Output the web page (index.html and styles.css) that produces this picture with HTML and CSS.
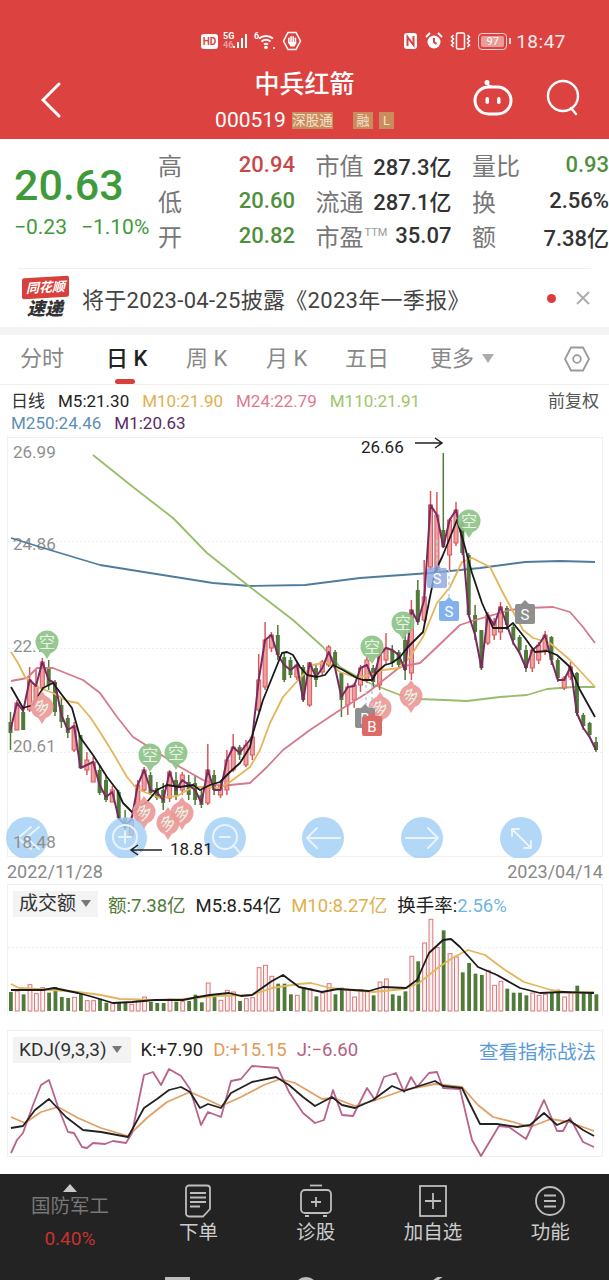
FILE: index.html
```html
<!DOCTYPE html>
<html lang="zh-CN">
<head>
  <meta charset="UTF-8" />
  <title>中兵红箭 000519</title>
  <link rel="stylesheet" href="styles.css">
</head>
<body>

  <header class="top">
    <div class="status">
      <div class="status-left">
        <span class="hd">HD</span>
        <svg class="ico-signal" width="26" height="20" viewBox="0 0 26 20">
          <text x="0" y="8" class="tiny">5G</text>
          <text x="0" y="17" class="tiny dim">46</text>
          <path d="M11 17v-2M15 17v-6M19 17V7M23 17V3" class="st"/>
        </svg>
        <svg class="ico-wifi" width="23" height="20" viewBox="0 0 23 20">
          <text x="0" y="8" class="tiny">6</text>
          <path d="M5 7.5a11 11 0 0 1 14 0M7.5 10.5a7.500 7.500 0 0 1 9 0M10 13.500a3.500 3.500 0 0 1 4 0" class="st"/>
          <circle cx="12" cy="16.500" r="1.800" class="fillw"/>
          <circle cx="20" cy="17" r="1" class="fillw"/>
        </svg>
        <svg class="ico-hand" width="20" height="20" viewBox="0 0 20 20">
          <path d="M6 1.500h8l4.500 8.500-4.500 8.500H6L1.500 10z" class="st thin"/>
          <rect x="6" y="6.500" width="1.600" height="6" rx="0.800" class="fillw"/>
          <rect x="8.200" y="5" width="1.600" height="7" rx="0.800" class="fillw"/>
          <rect x="10.400" y="5" width="1.600" height="7" rx="0.800" class="fillw"/>
          <rect x="12.600" y="6.500" width="1.600" height="6" rx="0.800" class="fillw"/>
          <path d="M6 11h8.200v1.500l-1.700 3h-4z" class="fillw"/>
        </svg>
      </div>
      <div class="status-right">
        <svg width="15" height="18" viewBox="0 0 15 18">
          <rect x="1" y="1" width="13" height="16" rx="3" class="fillw"/>
          <path d="M4.500 14V5l6 8V4" class="st red"/>
        </svg>
        <svg width="18" height="18" viewBox="0 0 18 18">
          <circle cx="9" cy="10" r="6.500" class="fillw"/>
          <path d="M9 6v4l2.500 2" class="st red"/>
          <path d="M1 5l4-4M17 5l-4-4" class="st"/>
        </svg>
        <svg width="21" height="18" viewBox="0 0 21 18">
          <rect x="6.500" y="1" width="8" height="16" rx="1.500" class="st thin"/>
          <path d="M3.500 3l-2 2 2 2-2 2 2 2-2 2 2 2M17.500 3l2 2-2 2 2 2-2 2 2 2-2 2" class="st thin"/>
        </svg>
        <span class="battery"><span class="battery-level">97</span></span>
        <span class="clock">18:47</span>
      </div>
    </div>

    <div class="titlebar">
      <div class="title-left">
        <svg width="20" height="36" viewBox="0 0 20 36"><path d="M18 2L2 18l16 16" class="st bold"/></svg>
      </div>
      <div class="title-mid">
        <h1>中兵红箭</h1>
        <div class="code-row">
          <span class="code">000519</span>
          <span class="tag tag-wide">深股通</span>
          <span class="tag tag-rong">融</span>
          <span class="tag tag-l">L</span>
        </div>
      </div>
      <div class="title-right">
        <svg width="40" height="38" viewBox="0 0 40 38">
          <circle cx="14" cy="3.500" r="2.500" class="fillw"/>
          <path d="M14 5c2 2 4 3 6 3" class="st thin2"/>
          <rect x="2" y="8" width="36" height="27" rx="13.500" class="st bold"/>
          <rect x="12.500" y="18" width="3.500" height="7" rx="1.700" class="fillw"/>
          <rect x="24" y="18" width="3.500" height="7" rx="1.700" class="fillw"/>
        </svg>
        <svg width="36" height="38" viewBox="0 0 36 38">
          <circle cx="17" cy="17" r="15" class="st mid"/>
          <path d="M25 29l5 6" class="st mid"/>
        </svg>
      </div>
    </div>
  </header>

  <section class="quote">
    <div class="price-box">
      <div class="price">20.63</div>
      <div class="change"><span>−0.23</span><span>−1.10%</span></div>
    </div>
    <div class="quote-grid">
      <div class="cell"><span class="lbl">高</span><span class="val up">20.94</span></div>
      <div class="cell"><span class="lbl">市值</span><span class="val">287.3亿</span></div>
      <div class="cell"><span class="lbl">量比</span><span class="val down">0.93</span></div>
      <div class="cell"><span class="lbl">低</span><span class="val down">20.60</span></div>
      <div class="cell"><span class="lbl">流通</span><span class="val">287.1亿</span></div>
      <div class="cell"><span class="lbl">换</span><span class="val">2.56%</span></div>
      <div class="cell"><span class="lbl">开</span><span class="val down">20.82</span></div>
      <div class="cell"><span class="lbl">市盈<sup class="ttm">TTM</sup></span><span class="val">35.07</span></div>
      <div class="cell"><span class="lbl">额</span><span class="val">7.38亿</span></div>
    </div>
  </section>

  <section class="notice">
    <div class="logo">
      <span class="logo-top">同花顺</span>
      <span class="logo-bottom">速递</span>
    </div>
    <p class="notice-text">将于2023-04-25披露《2023年一季报》</p>
    <span class="dot"></span>
    <svg class="close" width="14" height="14" viewBox="0 0 14 14"><path d="M1 1l12 12M13 1L1 13"/></svg>
  </section>

  <nav class="tabs">
    <span class="tab t1">分时</span>
    <span class="tab t2 active">日 K</span>
    <span class="tab t3">周 K</span>
    <span class="tab t4">月 K</span>
    <span class="tab t5">五日</span>
    <span class="tab t6">更多<i class="tri"></i></span>
    <svg class="hex" width="28" height="28" viewBox="0 0 28 28">
      <path d="M8 2.500h12l6 11.500-6 11.500H8L2 14z"/>
      <circle cx="14" cy="14" r="3.800"/>
    </svg>
  </nav>

  <div class="legend">
    <div class="legend-row">
      <span class="k-name">日线</span>
      <span class="c-black">M5:21.30</span>
      <span class="c-yellow">M10:21.90</span>
      <span class="c-pink">M24:22.79</span>
      <span class="c-green">M110:21.91</span>
      <span class="adjust">前复权</span>
    </div>
    <div class="legend-row">
      <span class="c-blue">M250:24.46</span>
      <span class="c-purple">M1:20.63</span>
    </div>
  </div>

  <svg id="kline" class="chart" width="609" height="422" viewBox="0 436 609 422"></svg>

  <div class="dates"><span>2022/11/28</span><span>2023/04/14</span></div>

  <section class="panel panel-vol">
    <div class="panel-head">
      <span class="picker">成交额<i class="tri small"></i></span>
      <span class="c-dgreen">额:7.38亿</span>
      <span class="c-black">M5:8.54亿</span>
      <span class="c-yellow">M10:8.27亿</span>
      <span class="c-black">换手率:<span class="c-sky">2.56%</span></span>
    </div>
    <svg id="volume" class="chart" width="609" height="100" viewBox="0 917 609 100"></svg>
  </section>

  <section class="panel panel-kdj">
    <div class="panel-head">
      <span class="picker picker-wide">KDJ(9,3,3)<i class="tri small"></i></span>
      <span class="c-black">K:+7.90</span>
      <span class="c-orange">D:+15.15</span>
      <span class="c-plum">J:−6.60</span>
      <a class="tactic">查看指标战法</a>
    </div>
    <svg id="kdj" class="chart" width="609" height="94" viewBox="0 1063 609 94"></svg>
  </section>

  <footer class="bottom">
    <div class="sector">
      <i class="tri-up"></i>
      <span class="sector-name">国防军工</span>
      <span class="sector-pct">0.40%</span>
    </div>
    <div class="action">
      <svg width="28" height="34" viewBox="0 0 28 34">
        <path d="M5 1.500h18a3 3 0 0 1 3 3V25l-7 7.500H5a3 3 0 0 1-3-3v-25a3 3 0 0 1 3-3z"/>
        <path d="M6 9h16M6 13.500h16M6 18h16M6 22.500h10"/>
      </svg>
      <span>下单</span>
    </div>
    <div class="action">
      <svg width="34" height="34" viewBox="0 0 34 34">
        <path d="M11 1.500h12"/>
        <rect x="2" y="6" width="30" height="23" rx="4"/>
        <path d="M17 13v10M12 18h10M6 32h4M24 32h4"/>
      </svg>
      <span>诊股</span>
    </div>
    <div class="action">
      <svg width="30" height="34" viewBox="0 0 30 34">
        <rect x="2" y="2" width="26" height="30"/>
        <path d="M15 9v16M7 17h16"/>
      </svg>
      <span>加自选</span>
    </div>
    <div class="action">
      <svg width="32" height="34" viewBox="0 0 32 34">
        <circle cx="16" cy="17" r="14"/>
        <path d="M10 11.500h12M10 17h12M10 22.500h12"/>
      </svg>
      <span>功能</span>
    </div>
    <div class="navkeys">
      <i class="nav-square"></i>
      <i class="nav-circle"></i>
      <i class="nav-back"></i>
    </div>
  </footer>

  <script src="chart.js"></script>
</body>
</html>
```

FILE: styles.css
```css
* {
  box-sizing: border-box;
}

html, body {
  margin: 0;
  padding: 0;
}

body {
  width: 609px;
  height: 1280px;
  overflow: hidden;
  background: #fff;
  color: #333;
  font-family: Roboto, "Noto Sans CJK SC", sans-serif;
}

svg {
  display: block;
  flex: none;
}

/* 顶部红色区域 */
.top {
  height: 139px;
  padding-top: 28px;
  background: #dc4340;
  color: #fff;
}

.status {
  display: flex;
  justify-content: space-between;
  height: 26px;
  padding: 0 43px 0 201px;
}

.status-left, .status-right {
  display: flex;
  align-items: center;
}

.status-left { gap: 5px; }
.status-right { gap: 7px; }

.st {
  fill: none;
  stroke: #fff;
  stroke-width: 2;
}
.st.thin { stroke-width: 1.500; }
.st.thin2 { stroke-width: 1.800; }
.st.mid { stroke-width: 2.400; stroke-linecap: round; }
.st.bold { stroke-width: 3; stroke-linecap: round; }
.st.red { stroke: #dc4340; }
.fillw { fill: #fff; }

.tiny {
  fill: #fff;
  font-size: 9px;
  font-weight: 700;
}
.tiny.dim { fill: #f2a09e; }

.hd {
  width: 17px;
  height: 15px;
  border-radius: 3px;
  background: #fff;
  color: #dc4340;
  font-size: 10px;
  font-weight: 700;
  line-height: 15px;
  text-align: center;
}

.battery {
  position: relative;
  width: 29px;
  height: 17px;
  margin-right: 2px;
  padding: 2px;
  border: 1.500px solid #f4d2d1;
  border-radius: 4px;
}
.battery::after {
  content: "";
  position: absolute;
  right: -5px;
  top: 4px;
  width: 2px;
  height: 6px;
  background: #f4d2d1;
}
.battery-level {
  display: block;
  height: 100%;
  border-radius: 2px;
  background: #ea9c9a;
  font-size: 11px;
  line-height: 11px;
  text-align: center;
}

.clock {
  font-size: 19px;
  letter-spacing: 0.5px;
  color: #fbecec;
}

.titlebar {
  display: grid;
  grid-template-columns: 1fr auto 1fr;
  margin-top: 16px;
}

.title-left {
  padding: 12px 0 0 41px;
}

.title-mid {
  text-align: center;
}

.title-mid h1 {
  margin: 0;
  font-size: 25px;
  font-weight: 500;
  line-height: 30px;
}

.code-row {
  display: flex;
  align-items: center;
  height: 24px;
  margin-top: 8px;
}

.code {
  font-size: 21px;
  margin-right: 6px;
}

.tag {
  height: 17px;
  background: #c98c5c;
  color: #f4e3d2;
  font-size: 13px;
  line-height: 17px;
  text-align: center;
}
.tag-wide { width: 41px; overflow: hidden; white-space: nowrap; font-size: 13.500px; }
.tag-rong { width: 20px; margin-left: 20px; }
.tag-l { width: 15px; margin-left: 6px; }

.title-right {
  display: flex;
  justify-content: flex-end;
  gap: 33px;
  padding: 9px 27px 0 0;
}

/* 行情 */
.quote {
  display: flex;
  height: 129px;
  padding-top: 8px;
}

.price-box {
  width: 158px;
  padding: 11px 0 0 14px;
}

.price {
  font-size: 43px;
  font-weight: 500;
  line-height: 54px;
  color: #3f9a3c;
}

.change {
  display: flex;
  gap: 14px;
  margin-top: 1px;
  font-size: 21px;
  line-height: 28px;
  color: #3f9a3c;
  white-space: nowrap;
}

.quote-grid {
  display: grid;
  grid-template-columns: 137px 136px 137px;
  grid-auto-rows: 35.500px;
  column-gap: 20.500px;
}

.cell {
  display: flex;
  align-items: center;
  justify-content: space-between;
  white-space: nowrap;
}

.lbl {
  font-size: 24px;
  color: #777;
}

.ttm {
  margin-left: 1px;
  font-size: 11px;
  line-height: 0;
  vertical-align: 10px;
  color: #999;
}

.val {
  font-size: 22px;
  font-weight: 500;
  color: #333;
}
.val.up { color: #c8474a; }
.val.down { color: #4f8f3e; }

/* 公告 */
.notice {
  display: flex;
  align-items: center;
  height: 59px;
  margin: 0 18px;
  border-top: 1px solid #f0f0f0;
  padding: 0 1px 0 3px;
}

.logo {
  display: flex;
  flex-direction: column;
  align-items: center;
  width: 48px;
  margin-right: 13px;
}

.logo-top {
  width: 47px;
  height: 21px;
  border-radius: 2px;
  transform: skewY(-3deg);
  background: #d8403c;
  color: #fff;
  font-size: 13px;
  font-style: italic;
  font-weight: 700;
  line-height: 21px;
  text-align: center;
}

.logo-bottom {
  margin-top: 1px;
  color: #333;
  font-size: 18px;
  font-style: italic;
  font-weight: 900;
  line-height: 20px;
}

.notice-text {
  flex: 1;
  margin: 0;
  font-size: 22px;
  letter-spacing: 0.300px;
  color: #444;
  white-space: nowrap;
}

.dot {
  width: 9px;
  height: 9px;
  margin-right: 20px;
  border-radius: 50%;
  background: #dc3c3a;
}

.close {
  fill: none;
  stroke: #aaa;
  stroke-width: 1.800;
}

/* 周期切换 */
.tabs {
  position: relative;
  display: flex;
  align-items: center;
  height: 58px;
  border-top: 8px solid #f4f4f4;
  border-bottom: 1px solid #efefef;
  font-size: 22px;
  color: #888;
}

.tab {
  position: absolute;
  top: 9px;
  line-height: 30px;
  white-space: nowrap;
}
.t1 { left: 20px; }
.t2 { left: 106px; }
.t3 { left: 186px; }
.t4 { left: 266px; }
.t5 { left: 345px; }
.t6 { left: 430px; }

.tab.active {
  color: #222;
  font-weight: 500;
}
.tab.active::after {
  content: "";
  position: absolute;
  left: 9px;
  bottom: -10px;
  width: 20px;
  height: 5px;
  border-radius: 3px;
  background: #d8403c;
}

.tri {
  display: inline-block;
  margin-left: 8px;
  border-left: 6px solid transparent;
  border-right: 6px solid transparent;
  border-top: 9px solid #aaa;
  vertical-align: 3px;
}
.tri.small {
  margin-left: 5px;
  border-left-width: 5px;
  border-right-width: 5px;
  border-top: 7px solid #777;
  vertical-align: 3px;
}

.hex {
  position: absolute;
  right: 18px;
  top: 10px;
  fill: none;
  stroke: #999;
  stroke-width: 1.800;
}

/* 均线 */
.legend {
  height: 51px;
  padding: 5px 10px 0 11px;
  font-size: 17px;
  line-height: 22px;
}

.legend-row {
  display: flex;
  gap: 13px;
}

.k-name { color: #333; margin-right: 0; }
.adjust { margin-left: auto; color: #555; }

.c-black { color: #222; }
.c-yellow { color: #e0b050; }
.c-pink { color: #de7a90; }
.c-green { color: #9cc66a; }
.c-blue { color: #5d8fb5; }
.c-purple { color: #5a2a66; }
.c-dgreen { color: #4f7a3a; }
.c-sky { color: #6fb6e0; }
.c-orange { color: #e39a5a; }
.c-plum { color: #b4607f; }

.chart {
  display: block;
}

.dates {
  display: flex;
  justify-content: space-between;
  height: 26px;
  padding: 3px 6px 0 7px;
  font-size: 18px;
  line-height: 22px;
  color: #888;
}

/* 副图 */
.panel {
  position: relative;
  margin: 0 6px 0 7px;
  border: 1px solid #f0f0f0;
  background: #fff;
}

.panel .chart {
  margin-left: -8px;
}

.panel-vol {
  height: 131px;
  padding-top: 6px;
  border-bottom: 0;
}

.panel-kdj {
  height: 127px;
  margin-top: 15px;
  padding-top: 6px;
}

.panel-head {
  display: flex;
  align-items: center;
  gap: 10px;
  height: 26px;
  padding-left: 5px;
  font-size: 18.500px;
  white-space: nowrap;
}

.picker {
  display: block;
  height: 26px;
  padding: 0 7px 0 6px;
  background: #f3f3f3;
  color: #333;
  font-size: 19px;
  line-height: 25px;
}
.picker-wide {
  padding-right: 9px;
}

.tactic {
  margin-left: auto;
  margin-right: 6px;
  font-size: 19.500px;
  color: #5b9bd5;
}

/* svg 图形 */
.grid-line {
  stroke: #eee;
  stroke-width: 1;
  stroke-dasharray: 2 2;
}
.frame {
  fill: none;
  stroke: #f0f0f0;
}
.axis {
  fill: #8f8f8f;
  font-size: 17px;
}
.note {
  fill: #222;
  font-size: 17px;
}
.arrow {
  fill: none;
  stroke: #222;
  stroke-width: 1.500;
}
.line {
  fill: none;
  stroke-width: 1.800;
  stroke-linejoin: round;
}
.l-close { stroke: #7a2a5e; stroke-width: 2; }
.l-m5 { stroke: #1a1a1a; }
.l-m10 { stroke: #e3b65c; }
.l-m24 { stroke: #d57a8c; }
.l-m110 { stroke: #97bd6b; }
.l-m250 { stroke: #4f7c9c; }
.l-k { stroke: #222; }
.l-d { stroke: #e0a066; }
.l-j { stroke: #b8638c; }

.wick-r { stroke: #d8565a; stroke-width: 1.500; }
.wick-g { stroke: #4f7a3a; stroke-width: 1.500; }
.body-r { fill: #eea0a0; stroke: #d8565a; }
.body-g { fill: #4f7a3a; }
.bar-r { fill: #fdf3f3; stroke: #d9777a; }
.bar-g { fill: #4f7a3a; }

.pin-kong { fill: #8fc488; }
.pin-duo { fill: #ec9a98; }
.pin-group { opacity: 0.92; }
.pin-text {
  fill: #e8f5e6;
  font-size: 16px;
  text-anchor: middle;
}
.flag-text {
  fill: #fff;
  font-size: 15px;
  text-anchor: middle;
}
.flag-grey { fill: #8f8f8f; }
.flag-red { fill: #dc6a66; }
.flag-blue { fill: #82b2ee; }
.flag-faint { fill: #8aa5e0; opacity: 0.8; }
.flag-link {
  stroke: #b9cfe6;
  stroke-width: 1.500;
  stroke-dasharray: 3 3;
}

.nav-btn { fill: #9fcdf5; opacity: 0.8; }
.nav-ico {
  fill: none;
  stroke: #e8f3fc;
  stroke-width: 2;
  stroke-linecap: round;
}

/* 底部工具栏 */
.bottom {
  position: relative;
  display: flex;
  height: 106px;
  margin-top: 17px;
  padding-top: 10px;
  background: #232323;
  color: #ccc;
}

.sector {
  display: flex;
  flex-direction: column;
  align-items: center;
  width: 140px;
}

.tri-up {
  width: 0;
  border-left: 7px solid transparent;
  border-right: 7px solid transparent;
  border-bottom: 8px solid #c9c9c9;
}

.sector-name {
  margin-top: 1px;
  font-size: 19.500px;
  line-height: 28px;
  color: #777;
}

.sector-pct {
  margin-top: 5px;
  font-size: 19px;
  line-height: 26px;
  color: #c8322e;
}

.action {
  display: flex;
  flex-direction: column;
  align-items: center;
  width: 117.500px;
  font-size: 19.500px;
  line-height: 28px;
}

.action svg {
  fill: none;
  stroke: #bdbdbd;
  stroke-width: 1.800;
}

.action span {
  margin-top: 1px;
}

.navkeys {
  position: absolute;
  left: 0;
  right: 0;
  top: 103px;
  height: 3px;
  overflow: hidden;
}
.navkeys i {
  position: absolute;
  top: 0;
  display: block;
}
.nav-square {
  left: 165px;
  width: 25px;
  height: 25px;
  border-top: 3px solid #bdbdbd;
}
.nav-circle {
  left: 294px;
  width: 24px;
  height: 24px;
  border: 3px solid #bdbdbd;
  border-radius: 50%;
}
.nav-back {
  left: 432px;
  width: 16px;
  height: 16px;
  border-top: 3px solid #bdbdbd;
  transform: rotate(-35deg);
}
```

FILE: chart.js
```js
// K线和副图都画成 svg，数据直接按屏幕坐标记下来
const NS = 'http://www.w3.org/2000/svg';

function add(parent, tag, attrs, text) {
  const node = document.createElementNS(NS, tag);
  for (const key in attrs) node.setAttribute(key, attrs[key]);
  if (text) node.textContent = text;
  parent.appendChild(node);
  return node;
}

function line(parent, cls, pts) {
  add(parent, 'polyline', { class: 'line ' + cls, points: pts.join(' ') });
}

const STEP = 6.364;
const X0 = 10.5;

// type, 实体上沿, 实体下沿, 最高, 最低, 收盘
const candles = [
  ['g',722,733,712,750,730],['r',703,730,700,730,703],['g',712,730,708,730,711],['r',680,710,667,712,680],
  ['r',686,700,670,702,686],['r',662,688,658,690,662],['g',668,685,660,690,680],['g',682,712,680,716,683],
  ['g',705,722,698,728,715],['g',718,733,715,738,730],['r',726,750,722,752,726],['g',735,768,735,768,768],
  ['r',760,770,752,775,765],['r',762,782,757,782,762],['g',770,793,765,795,785],['g',780,800,775,802,797],
  ['r',790,802,786,802,792],['g',792,818,790,820,818],['g',818,828,810,832,825],['r',820,835,816,838,820],
  ['r',785,815,780,822,785],['r',770,790,767,792,770],['g',775,793,772,795,790],['g',788,798,782,800,792],
  ['g',790,803,783,810,800],['r',772,798,770,802,772],['g',780,795,772,800,790],['r',775,790,772,795,780],
  ['g',782,795,775,800,785],['g',783,800,776,805,790],['g',795,805,790,808,803],['r',770,803,744,805,770],
  ['g',775,790,770,795,790],['r',785,795,782,798,790],['r',760,790,750,795,760],['r',747,770,734,772,747],
  ['g',747,755,745,760,753],['r',745,765,740,767,745],['r',737,755,735,760,737],['r',680,710,654,712,680],
  ['r',640,687,622,690,640],['r',635,648,632,652,635],['g',635,655,625,660,655],['g',657,680,652,682,665],
  ['g',660,675,657,678,670],['r',665,677,662,680,665],['g',667,700,665,702,700],['r',663,705,662,707,663],
  ['g',668,680,665,687,677],['r',662,672,660,675,668],['r',647,665,645,667,652],['g',652,666,650,668,668],
  ['g',673,700,673,717,697],['r',687,705,683,715,687],['r',685,700,683,708,686],['r',668,685,665,692,668],
  ['r',660,680,657,683,665],['g',668,682,665,687,680],['r',655,685,648,690,655],['r',648,660,633,664,648],
  ['g',650,663,645,667,650],['g',652,665,650,668,655],['g',640,670,625,680,670],['r',610,673,600,680,610],
  ['g',590,622,580,625,622],['r',597,620,560,622,600],['r',505,567,491,570,505],['r',515,570,492,572,515],
  ['g',530,547,453,548,547],['r',520,555,518,570,520],['r',510,543,502,546,510],['g',523,553,515,555,540],
  ['g',555,615,553,617,615],['g',615,632,605,640,635],['g',630,668,630,670,668],['r',615,643,612,645,615],
  ['r',622,635,618,640,625],['r',607,632,602,640,607],['g',608,625,606,630,625],['g',627,640,625,645,643],
  ['g',637,650,635,655,653],['g',650,668,645,672,668],['r',650,668,648,672,650],['r',645,660,642,664,645],
  ['r',635,650,631,655,635],['g',637,660,636,665,660],['g',660,678,658,682,680],['r',678,688,676,690,680],
  ['r',667,677,662,680,667],['g',673,713,672,716,713],['g',715,726,713,730,728],['g',723,735,722,738,737],
  ['g',742,750,737,752,750]
];

const m5 = ['11,687','23,708','33,705','43,688','53,683','62,695','72,708','80,737','93,755','107,777','117,790','123,803','132,812','147,802','157,790','167,785','180,787','193,785','200,790','210,785','220,782','230,772','240,763','250,747','253,733','263,700','282,653','287,652','293,655','300,667','307,675','317,677','325,675','333,665','343,670','357,678','363,680','372,680','377,672','385,665','392,663','400,657','407,648','423,632','430,597','435,572','443,555','457,520','463,540','472,573','482,603','493,628','507,628','513,623','525,638','535,652','547,651','557,655','570,667','580,690','595,717'];
const m10 = ['11,652','18,663','25,677','37,687','53,693','67,701','78,703','90,717','100,732','113,753','127,777','137,789','147,793','160,798','177,796','193,787','207,787','220,788','230,782','250,767','260,750','270,723','283,697','300,678','313,665','327,662','340,672','357,678','370,675','383,670','400,668','410,657','423,637','437,603','450,587','462,562','472,558','490,567','503,593','523,630','533,638','550,643','570,660','595,687'];
const m24 = ['11,681','27,678','37,668','53,668','83,680','100,693','117,717','133,737','157,752','180,767','203,780','220,786','250,783','267,767','283,750','310,730','340,710','367,693','400,667','420,663','437,647','460,625','472,621','510,610','527,608','553,607','570,612','583,627','595,643'];
const m110 = ['93,455','133,487','173,518','207,553','250,587','267,600','293,620','323,647','340,667','367,682','387,690','400,695','420,699','467,701','500,697','527,695','547,689','573,687','595,687'];
const m250 = ['11,538','50,550','100,565','150,573','213,583','250,586','305,585','360,578','430,573','480,568','525,562','560,561','595,562'];

// 成交额柱子顶部，放大图里量的数，基线 452，高度再除 3
const volTops = [
  ['g',395],['r',392],['g',402],['r',373],['r',400],['r',382],['g',397],['g',380],['g',410],['g',413],
  ['r',411],['g',398],['r',421],['r',421],['g',415],['g',427],['r',430],['g',426],['g',425],['r',432],
  ['r',420],['r',410],['g',425],['g',428],['g',428],['r',416],['g',424],['r',424],['g',422],['g',403],
  ['g',426],['r',368],['g',405],['r',420],['r',390],['r',395],['g',422],['r',415],['r',412],['r',322],
  ['r',315],['r',348],['g',370],['g',370],['g',402],['r',405],['g',380],['r',385],['g',408],['r',398],
  ['r',370],['g',402],['g',382],['r',390],['r',410],['r',388],['r',392],['g',405],['r',365],['r',356],
  ['g',402],['g',406],['g',393],['r',288],['g',303],['r',248],['r',177],['r',262],['g',210],['r',280],
  ['r',290],['g',336],['g',308],['g',340],['g',344],['r',330],['r',375],['r',363],['g',385],['g',397],
  ['g',397],['g',405],['r',398],['r',405],['r',402],['g',398],['g',388],['r',410],['r',398],['g',376],
  ['g',395],['g',398],['g',402]
];

const volM5 = ['11,990','43,990','54,988','78,993','93,997','113,1003','132,1002','155,1000','183,1000','198,997','210,995','229,993','241,996','252,995','272,981','283,975','299,987','322,992','338,989','369,991','383,987','406,988','417,980','429,953','443,940','451,939','460,947','478,967','497,975','520,988','540,993','563,992','594,993'];
const volM10 = ['11,984','19,988','39,989','78,992','101,995','120,999','155,1000','183,999','217,996','252,995','272,988','299,984','311,983','330,988','350,990','373,992','404,989','419,983','439,967','454,957','468,950','485,955','505,970','524,982','551,990','571,993','594,992'];

const kLine = ['11,1128','23,1126','35,1110','49,1099','66,1117','83,1130','101,1132','128,1137','144,1108','157,1099','169,1090','181,1087','190,1092','200,1108','208,1104','221,1108','231,1093','252,1082','276,1077','289,1085','303,1097','315,1106','332,1097','342,1105','355,1108','373,1100','392,1086','404,1091','416,1087','435,1081','443,1086','462,1088','480,1124','497,1124','517,1127','530,1125','544,1113','557,1125','569,1120','583,1130','594,1136'];
const dLine = ['11,1117','25,1123','41,1112','58,1107','78,1118','101,1128','128,1136','148,1117','167,1102','190,1092','206,1099','221,1106','241,1097','264,1085','280,1079','295,1083','322,1099','334,1098','355,1106','373,1101','404,1090','435,1084','462,1087','478,1105','493,1117','513,1122','530,1127','551,1119','569,1122','594,1131'];
const jLine = ['11,1153','17,1140','23,1133','33,1105','41,1085','49,1080','58,1107','68,1132','74,1133','82,1147','87,1148','93,1143','105,1144','113,1141','126,1143','132,1133','144,1075','153,1072','161,1085','169,1069','181,1076','190,1089','201,1125','208,1112','221,1117','231,1081','241,1079','252,1066','278,1068','289,1092','303,1113','315,1123','324,1120','333,1090','342,1115','353,1116','367,1088','375,1100','384,1077','396,1073','404,1092','411,1077','417,1087','429,1073','437,1072','443,1088','460,1089','472,1140','481,1156','499,1126','509,1127','526,1139','544,1100','557,1131','563,1131','570,1118','583,1142','594,1147'];

function drawPin(g, kind, x, y, label) {
  const cls = kind === 'kong' ? 'pin-kong' : 'pin-duo';
  const pin = add(g, 'g', { class: 'pin-group' });
  add(pin, 'circle', { class: cls, cx: x, cy: y, r: 11.5 });
  add(pin, 'path', { class: cls, d: `M${x - 5} ${y + 9}L${x} ${y + 17}L${x + 5} ${y + 9}z` });
  const t = add(pin, 'text', { class: 'pin-text', x: x, y: y + 6 }, label);
  if (kind === 'duo') {
    t.setAttribute('transform', `rotate(-30 ${x} ${y})`);
    add(pin, 'path', { class: cls, d: `M${x - 5} ${y - 9}L${x} ${y - 16}L${x + 5} ${y - 9}z` });
  }
}

function drawFlag(g, cls, x, y, label) {
  add(g, 'rect', { class: cls, x: x - 10, y: y - 10, width: 20, height: 20, rx: 2 });
  add(g, 'path', { class: cls, d: `M${x - 4} ${y - 10}L${x} ${y - 14}L${x + 4} ${y - 10}z` });
  add(g, 'text', { class: 'flag-text', x: x, y: y + 6 }, label);
}

function drawKline() {
  const svg = document.getElementById('kline');
  add(svg, 'rect', { class: 'frame', x: 7.5, y: 437.5, width: 595, height: 419 });
  [541.5, 648.5, 752.5].forEach(y => add(svg, 'line', { class: 'grid-line', x1: 8, x2: 602, y1: y, y2: y }));

  [['26.99', 452], ['24.86', 544], ['22.71', 646], ['20.61', 746]].forEach(([txt, y]) => {
    add(svg, 'text', { class: 'axis', x: 13, y: y + 6 }, txt);
  });

  line(svg, 'l-m250', m250);
  line(svg, 'l-m110', m110);

  const closes = [];
  candles.forEach((c, i) => {
    const x = +(X0 + i * STEP).toFixed(1);
    add(svg, 'line', { class: 'wick-' + c[0], x1: x, x2: x, y1: c[3], y2: c[4] });
    add(svg, 'rect', { class: 'body-' + c[0], x: x - 2, y: c[1], width: 4, height: c[2] - c[1] });
    closes.push(x + ',' + c[5]);
  });

  line(svg, 'l-m24', m24);
  line(svg, 'l-m10', m10);
  line(svg, 'l-close', closes);
  line(svg, 'l-m5', m5);

  const marks = add(svg, 'g', {});
  [[47, 642], [150, 755], [176, 753], [372, 647], [403, 623], [469, 521]].forEach(p => drawPin(marks, 'kong', p[0], p[1], '空'));
  [[42, 707], [144, 812], [168, 823], [182, 813], [380, 708], [411, 696]].forEach(p => drawPin(marks, 'duo', p[0], p[1], '多'));

  add(marks, 'line', { class: 'flag-link', x1: 437, x2: 437, y1: 540, y2: 570 });
  add(marks, 'line', { class: 'flag-link', x1: 449, x2: 449, y1: 570, y2: 600 });
  add(marks, 'line', { class: 'flag-link', x1: 366, x2: 366, y1: 685, y2: 710 });
  add(marks, 'line', { class: 'flag-link', x1: 372, x2: 372, y1: 685, y2: 715 });
  drawFlag(marks, 'flag-grey', 365, 718, 'B');
  drawFlag(marks, 'flag-red', 372, 726, 'B');
  drawFlag(marks, 'flag-faint', 437, 578, 'S');
  drawFlag(marks, 'flag-blue', 449, 611, 'S');
  drawFlag(marks, 'flag-grey', 525, 614, 'S');

  // 图上的半透明按钮
  const btns = add(svg, 'g', {});
  const centers = [27, 126, 225, 323, 422, 521];
  centers.forEach(x => add(btns, 'circle', { class: 'nav-btn', cx: x, cy: 838, r: 21 }));
  add(btns, 'path', { class: 'nav-ico', d: 'M31 827l-13 11 13 11M39 827l-13 11 13 11' });
  add(btns, 'circle', { class: 'nav-ico', cx: 125, cy: 837, r: 12 });
  add(btns, 'path', { class: 'nav-ico', d: 'M125 831v12M119 837h12M134 846l6 7' });
  add(btns, 'circle', { class: 'nav-ico', cx: 225, cy: 837, r: 12 });
  add(btns, 'path', { class: 'nav-ico', d: 'M220 837h10M234 846l6 7' });
  add(btns, 'path', { class: 'nav-ico', d: 'M340 838h-32M317 828l-10 10 10 10' });
  add(btns, 'path', { class: 'nav-ico', d: 'M406 838h32M428 828l10 10-10 10' });
  add(btns, 'path', { class: 'nav-ico', d: 'M512 829l19 19M512 829v7M512 829h7M531 848v-7M531 848h-7' });

  // 最低价和高点标注压在按钮上面
  add(svg, 'text', { class: 'axis', x: 13, y: 848 }, '18.48');
  add(svg, 'text', { class: 'note', x: 361, y: 453 }, '26.66');
  add(svg, 'path', { class: 'arrow', d: 'M415 443h27M435 438l7 5-7 5' });
  add(svg, 'text', { class: 'note', x: 170, y: 855 }, '18.81');
  add(svg, 'path', { class: 'arrow', d: 'M162 850h-30M138 845l-7 5 7 5' });
}

function drawVolume() {
  const svg = document.getElementById('volume');
  add(svg, 'line', { class: 'grid-line', x1: 8, x2: 602, y1: 947.5, y2: 947.5 });
  volTops.forEach((v, i) => {
    const h = (452 - v[1]) / 3;
    add(svg, 'rect', { class: 'bar-' + v[0], x: 9 + i * STEP, y: 1011 - h, width: 3.8, height: h });
  });
  line(svg, 'l-m10', volM10);
  line(svg, 'l-m5', volM5);
}

function drawKdj() {
  const svg = document.getElementById('kdj');
  add(svg, 'line', { class: 'grid-line', x1: 8, x2: 602, y1: 1093.5, y2: 1093.5 });
  line(svg, 'l-d', dLine);
  line(svg, 'l-j', jLine);
  line(svg, 'l-k', kLine);
}

drawKline();
drawVolume();
drawKdj();
```
